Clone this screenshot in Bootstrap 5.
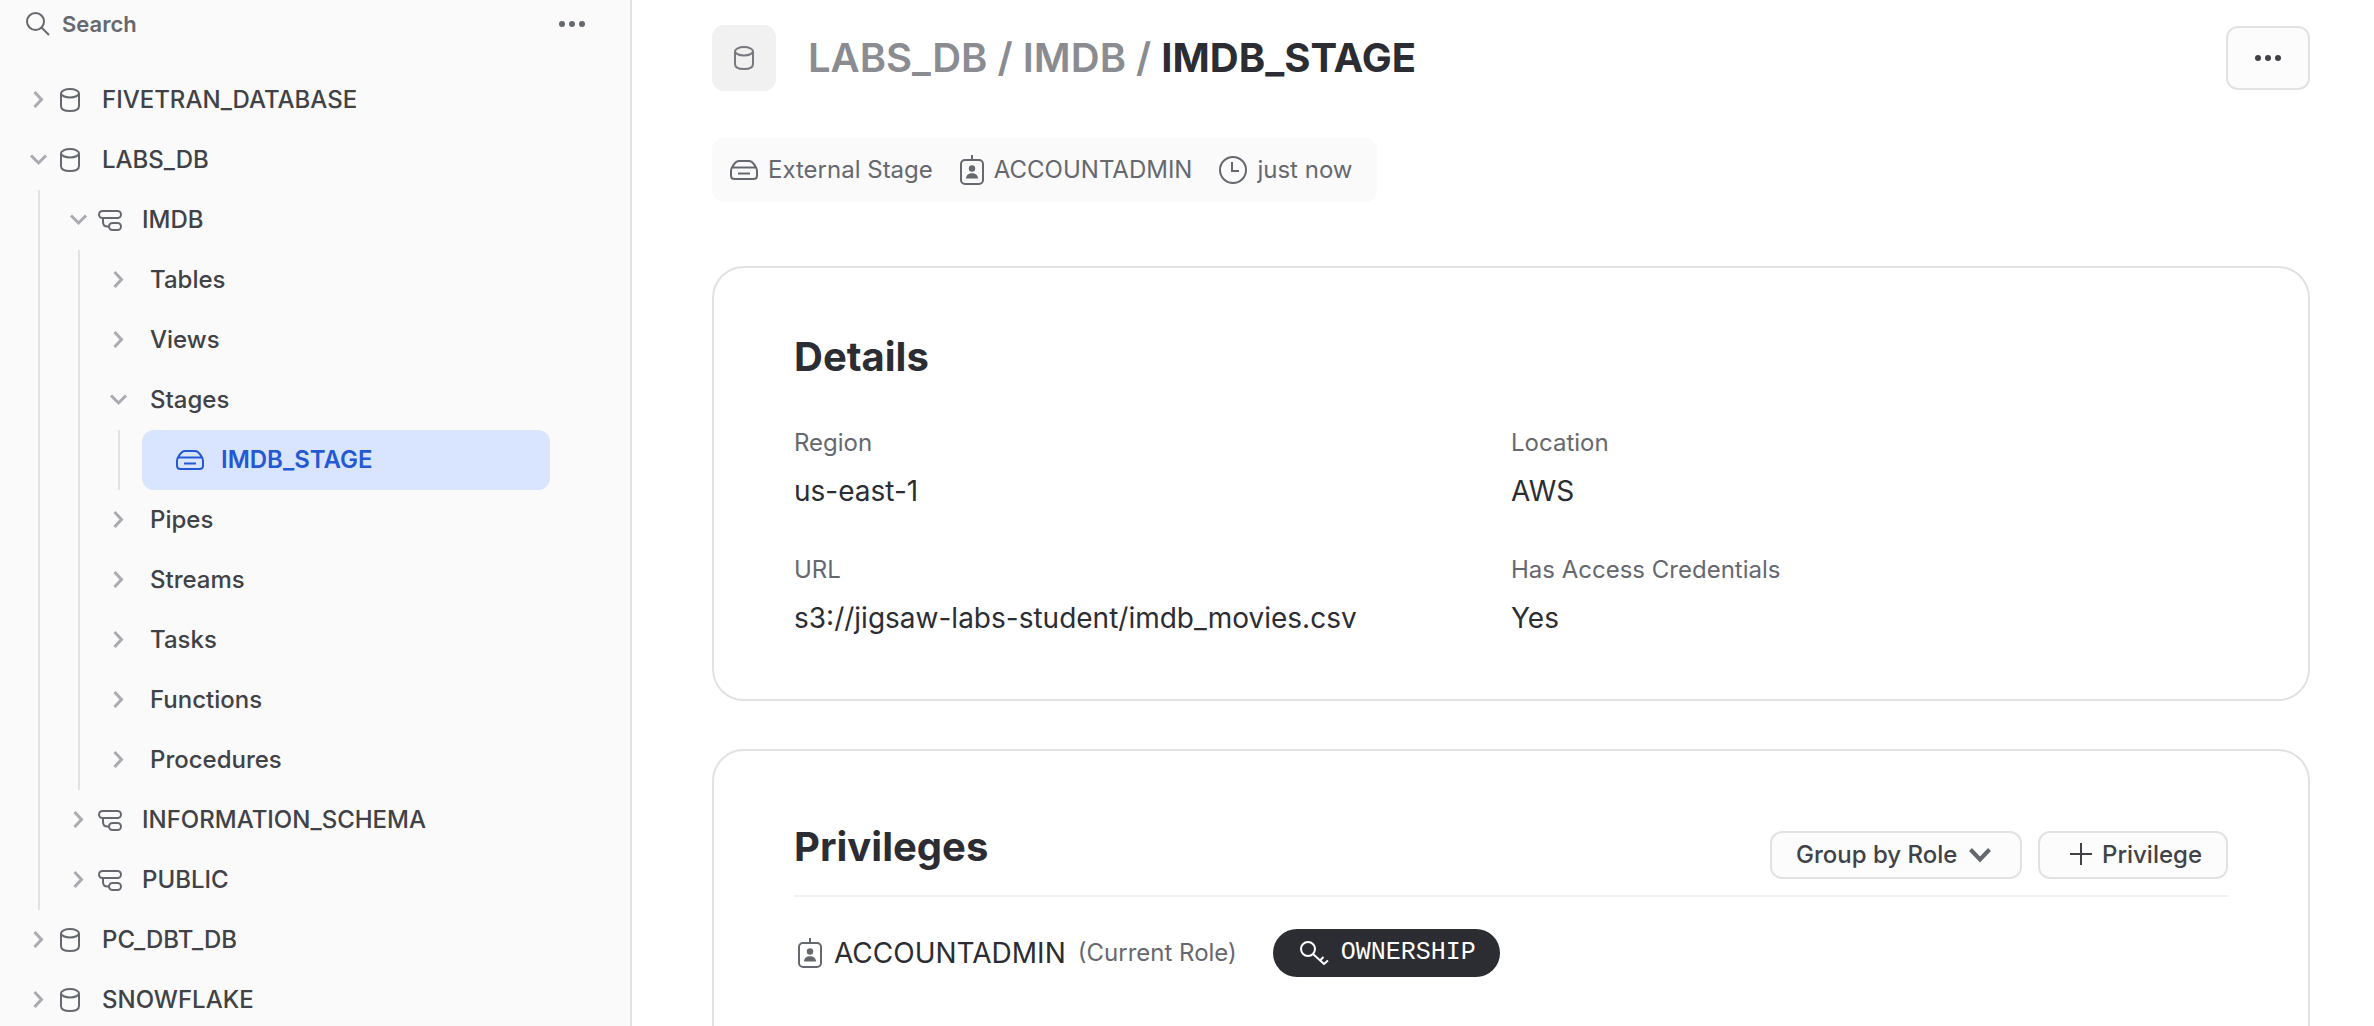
<!DOCTYPE html>
<html lang="en">
<head>
<meta charset="utf-8">
<meta name="viewport" content="width=device-width, initial-scale=1">
<title>IMDB_STAGE</title>
<link href="https://cdn.jsdelivr.net/npm/bootstrap@5.3.0/dist/css/bootstrap.min.css" rel="stylesheet">
<style>
  :root {
    --ink: #2c2d33;
    --ink-soft: #404247;
    --muted: #66686f;
    --faint: #a9abb0;
    --line: #e1e2e4;
    --panel: #fafafa;
  }
  body { font-family: Inter, sans-serif; font-size: 24px; line-height: 32px; color: var(--ink); background: #fff; }
  svg { display: block; flex: none; fill: none; stroke: currentColor; stroke-width: 2; }

  /* Object browser */
  .sidebar { width: 632px; background: var(--panel); border-right: 2px solid var(--line); padding-right: 80px; }
  .search-row { height: 48px; margin-bottom: 22px; padding-left: 26px; margin-right: -36px; color: var(--muted); }
  .search-box { font-size: 22px; line-height: 32px; font-weight: 600; color: var(--muted); }
  .search-box::placeholder { color: var(--muted); opacity: 1; }
  .search-more { color: inherit; }
  .tree-row { height: 60px; padding: 0 0 0 26px; gap: 8px; color: var(--ink-soft); font-size: 24px; line-height: 32px; font-weight: 500; text-align: left; }
  .tree-row .twisty { color: var(--faint); stroke-width: 3; }
  .tree-row .kind { color: var(--muted); }
  .tree-row .name { margin-left: 12px; }
  .tree-branch { margin-left: 38px; border-left: 2px solid var(--line); }
  .tree-leaf { height: 60px; margin-left: 22px; padding-left: 34px; gap: 17px; border-radius: 12px; background: #d9e5ff; color: #2459d6; font-weight: 600; text-decoration: none; }

  /* Object page */
  .page { padding: 25px 64px 0 80px; }
  .object-icon { width: 64px; height: 66px; border-radius: 12px; background: #f1f1f1; color: #77797f; }
  .crumbs { font-size: 40px; line-height: 48px; font-weight: 600; margin-left: 32px; color: #8a8c92; }
  .crumbs a { color: inherit; text-decoration: none; }
  .crumbs h1 { font: inherit; font-weight: 700; color: var(--ink); }
  .plain-btn { background: #fcfcfc; border: 2px solid var(--line); border-radius: 12px; color: var(--ink-soft); font-size: 24px; line-height: 32px; font-weight: 500; }
  .more-btn { width: 84px; height: 64px; }
  .meta { height: 64px; margin: 47px 0 64px; padding: 0 24px 0 18px; gap: 27px; border-radius: 12px; background: var(--panel); color: var(--muted); }
  .meta-item { gap: 10px; }
  .panel { border: 2px solid var(--line); border-radius: 32px; padding: 0 80px; }
  .panel h2 { font-size: 40px; line-height: 48px; font-weight: 700; }
  .details { padding-top: 65px; padding-bottom: 63px; margin-bottom: 48px; }
  .details h2 { margin-bottom: 46px; }
  .details dl { row-gap: 45px; }
  .details dt { font-weight: 400; line-height: 32px; color: var(--muted); }
  .details dd { margin: 14px 0 0; font-size: 28px; line-height: 36px; }
  .privileges { padding-top: 72px; padding-bottom: 160px; }
  .privileges-head { padding-bottom: 16px; border-bottom: 2px solid #f0f0f1; }
  .small-btn { height: 48px; padding: 0 24px; }
  select.small-btn { appearance: none; padding-right: 62px; background: #fcfcfc url("data:image/svg+xml,%3Csvg xmlns='http://www.w3.org/2000/svg' width='24' height='24' fill='none' stroke='%2366686f' stroke-width='4'%3E%3Cpath d='M2.500 6.500 12 16.500 21.500 6.500'/%3E%3C/svg%3E") no-repeat right 28px center; }
  .grant { padding-top: 32px; color: var(--muted); }
  .grant-role { font-size: 28px; line-height: 36px; color: var(--ink); }
  .owner-pill { height: 48px; margin-left: 36px; padding: 0 24px 0 26px; border-radius: 24px; background: var(--ink); color: #fff; gap: 12px; font-family: "Liberation Mono", monospace; font-size: 25px; line-height: 32px; }
</style>
<script src="https://cdn.jsdelivr.net/npm/bootstrap@5.3.0/dist/js/bootstrap.bundle.min.js"></script>
</head>
<body>
<svg class="d-none" aria-hidden="true">
  <symbol id="right" viewBox="0 0 24 24"><path d="M8.500 4 15.500 11.500 8.500 19"/></symbol>
  <symbol id="down" viewBox="0 0 24 24"><path d="M5 7.500 12.500 15 20 7.500"/></symbol>
  <symbol id="db" viewBox="0 0 24 24"><path d="M3 5.500V18c0 3 3 5 9 5s9-2 9-5V5.500"/><ellipse cx="12" cy="5.300" rx="9" ry="4.200"/></symbol>
  <symbol id="schema" viewBox="0 0 24 24"><rect x="1" y="3" width="22" height="7" rx="3.500"/><rect x="11" y="15" width="12" height="7" rx="3.500"/><path d="M5 10v4q0 4.500 4.500 4.500H11"/></symbol>
  <symbol id="stage" viewBox="0 0 28 24"><path d="M1 13C1 10 5 3 9 3h10c4 0 8 7 8 10v4.500q0 3.500-3.500 3.500h-19Q1 21 1 17.500zM2.500 9.500h23M8 15.500h12"/></symbol>
  <symbol id="role" viewBox="0 0 24 30"><rect x="1" y="5" width="22" height="24" rx="4"/><path d="M12 0v5"/><circle cx="12" cy="13.500" r="3.200" fill="currentColor" stroke="none"/><path d="M6 23.500c0-7 12-7 12 0z" fill="currentColor" stroke="none"/></symbol>
  <symbol id="dots" viewBox="0 0 28 8"><g fill="currentColor" stroke="none"><circle cx="4" cy="4" r="3"/><circle cx="14" cy="4" r="3"/><circle cx="24" cy="4" r="3"/></g></symbol>
</svg>

<div class="d-flex vh-100 overflow-hidden">
  <nav class="sidebar flex-shrink-0" aria-label="Databases">
    <div class="search-row d-flex align-items-center">
      <label for="search" aria-label="Search"><svg width="24" height="24" viewBox="0 0 24 24"><circle cx="9.500" cy="9.500" r="8.500"/><path d="M15.500 15.500 23 23"/></svg></label>
      <input id="search" type="text" placeholder="Search" class="search-box form-control border-0 bg-transparent shadow-none py-0 pe-0 ps-2 ms-1">
      <button type="button" class="search-more btn border-0 p-0" aria-label="More options"><svg width="28" height="8"><use href="#dots"/></svg></button>
    </div>
    <ul class="list-unstyled mb-0">
      <li><button type="button" class="tree-row btn border-0 w-100 d-flex align-items-center"><svg class="twisty" width="24" height="24"><use href="#right"/></svg><svg class="kind" width="24" height="24"><use href="#db"/></svg><span class="name">FIVETRAN_DATABASE</span></button></li>
      <li><button type="button" class="tree-row btn border-0 w-100 d-flex align-items-center" aria-expanded="true"><svg class="twisty" width="24" height="24"><use href="#down"/></svg><svg class="kind" width="24" height="24"><use href="#db"/></svg><span class="name">LABS_DB</span></button>
        <ul class="tree-branch list-unstyled mb-0">
          <li><button type="button" class="tree-row btn border-0 w-100 d-flex align-items-center" aria-expanded="true"><svg class="twisty" width="24" height="24"><use href="#down"/></svg><svg class="kind" width="24" height="24"><use href="#schema"/></svg><span class="name">IMDB</span></button>
            <ul class="tree-branch list-unstyled mb-0">
              <li><button type="button" class="tree-row btn border-0 w-100 d-flex align-items-center"><svg class="twisty" width="24" height="24"><use href="#right"/></svg><span class="name">Tables</span></button></li>
              <li><button type="button" class="tree-row btn border-0 w-100 d-flex align-items-center"><svg class="twisty" width="24" height="24"><use href="#right"/></svg><span class="name">Views</span></button></li>
              <li><button type="button" class="tree-row btn border-0 w-100 d-flex align-items-center" aria-expanded="true"><svg class="twisty" width="24" height="24"><use href="#down"/></svg><span class="name">Stages</span></button>
                <ul class="tree-branch list-unstyled mb-0">
                  <li><a href="#" class="tree-leaf d-flex align-items-center" aria-current="page"><svg width="28" height="24"><use href="#stage"/></svg>IMDB_STAGE</a></li>
                </ul>
              </li>
              <li><button type="button" class="tree-row btn border-0 w-100 d-flex align-items-center"><svg class="twisty" width="24" height="24"><use href="#right"/></svg><span class="name">Pipes</span></button></li>
              <li><button type="button" class="tree-row btn border-0 w-100 d-flex align-items-center"><svg class="twisty" width="24" height="24"><use href="#right"/></svg><span class="name">Streams</span></button></li>
              <li><button type="button" class="tree-row btn border-0 w-100 d-flex align-items-center"><svg class="twisty" width="24" height="24"><use href="#right"/></svg><span class="name">Tasks</span></button></li>
              <li><button type="button" class="tree-row btn border-0 w-100 d-flex align-items-center"><svg class="twisty" width="24" height="24"><use href="#right"/></svg><span class="name">Functions</span></button></li>
              <li><button type="button" class="tree-row btn border-0 w-100 d-flex align-items-center"><svg class="twisty" width="24" height="24"><use href="#right"/></svg><span class="name">Procedures</span></button></li>
            </ul>
          </li>
          <li><button type="button" class="tree-row btn border-0 w-100 d-flex align-items-center"><svg class="twisty" width="24" height="24"><use href="#right"/></svg><svg class="kind" width="24" height="24"><use href="#schema"/></svg><span class="name">INFORMATION_SCHEMA</span></button></li>
          <li><button type="button" class="tree-row btn border-0 w-100 d-flex align-items-center"><svg class="twisty" width="24" height="24"><use href="#right"/></svg><svg class="kind" width="24" height="24"><use href="#schema"/></svg><span class="name">PUBLIC</span></button></li>
        </ul>
      </li>
      <li><button type="button" class="tree-row btn border-0 w-100 d-flex align-items-center"><svg class="twisty" width="24" height="24"><use href="#right"/></svg><svg class="kind" width="24" height="24"><use href="#db"/></svg><span class="name">PC_DBT_DB</span></button></li>
      <li><button type="button" class="tree-row btn border-0 w-100 d-flex align-items-center"><svg class="twisty" width="24" height="24"><use href="#right"/></svg><svg class="kind" width="24" height="24"><use href="#db"/></svg><span class="name">SNOWFLAKE</span></button></li>
    </ul>
  </nav>

  <main class="page flex-grow-1">
    <header class="d-flex align-items-center">
      <div class="object-icon d-flex align-items-center justify-content-center"><svg width="24" height="24"><use href="#db"/></svg></div>
      <div class="crumbs"><a href="#">LABS_DB</a> / <a href="#">IMDB</a> / <h1 class="d-inline m-0">IMDB_STAGE</h1></div>
      <button type="button" class="plain-btn more-btn btn ms-auto d-flex align-items-center justify-content-center p-0" aria-label="More actions"><svg width="28" height="8"><use href="#dots"/></svg></button>
    </header>

    <div class="d-flex">
      <div class="meta d-flex align-items-center">
        <span class="meta-item d-flex align-items-center"><svg width="28" height="24"><use href="#stage"/></svg>External Stage</span>
        <span class="meta-item d-flex align-items-center"><svg width="24" height="30"><use href="#role"/></svg>ACCOUNTADMIN</span>
        <span class="meta-item d-flex align-items-center"><svg width="28" height="28" viewBox="0 0 28 28"><circle cx="14" cy="14" r="13"/><path d="M13 6v9h7"/></svg>just now</span>
      </div>
    </div>

    <section class="panel details">
      <h2>Details</h2>
      <dl class="row gx-0 mb-0">
        <div class="col-6"><dt>Region</dt><dd>us-east-1</dd></div>
        <div class="col-6"><dt>Location</dt><dd>AWS</dd></div>
        <div class="col-6"><dt>URL</dt><dd>s3://jigsaw-labs-student/imdb_movies.csv</dd></div>
        <div class="col-6"><dt>Has Access Credentials</dt><dd>Yes</dd></div>
      </dl>
    </section>

    <section class="panel privileges">
      <div class="privileges-head d-flex align-items-end gap-3">
        <h2 class="mb-2 me-auto">Privileges</h2>
        <select class="plain-btn small-btn" aria-label="Group privileges"><option>Group by Role</option></select>
        <button type="button" class="plain-btn small-btn btn d-flex align-items-center"><svg class="ms-1 me-2" width="26" height="26" viewBox="0 0 26 26"><path d="M13 1v22M2 12h22"/></svg>Privilege</button>
      </div>
      <div class="grant d-flex align-items-center">
        <svg class="ms-1 me-2" width="24" height="30"><use href="#role"/></svg>
        <span class="grant-role ms-1">ACCOUNTADMIN</span>
        <span class="ms-2 ps-1">(Current Role)</span>
        <span class="owner-pill d-flex align-items-center"><svg width="30" height="26" viewBox="0 0 30 26"><circle cx="9" cy="9" r="7"/><path d="M14 14 25 24 29 20.500M21 20.500 24.500 17"/></svg>OWNERSHIP</span>
      </div>
    </section>
  </main>
</div>
</body>
</html>
